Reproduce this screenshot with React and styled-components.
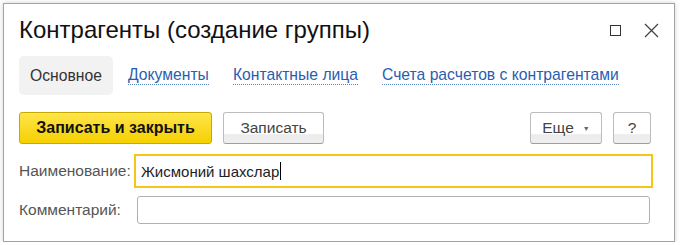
import React from "react";
import styled, { createGlobalStyle } from "styled-components";

const GlobalStyle = createGlobalStyle`
  html, body {
    margin: 0;
    background: #ffffff;
    font-family: "Liberation Sans", Arial, sans-serif;
  }
`;

const tabs = [
  { name: "Основное", active: true },
  { name: "Документы" },
  { name: "Контактные лица" },
  { name: "Счета расчетов с контрагентами" },
];

const App = () => {
  return (
    <>
      <GlobalStyle />
      <Window>
        <Header>
          <Title>Контрагенты (создание группы)</Title>
          <Controls>
            <IconButton aria-label="maximize">
              <svg width="13" height="13" viewBox="0 0 13 13">
                <rect x="1.5" y="1.5" width="10" height="10" fill="none" stroke="#333" strokeWidth="1" />
              </svg>
            </IconButton>
            <IconButton aria-label="close">
              <svg width="15" height="15" viewBox="0 0 15 15">
                <path d="M1 1 L14 14 M14 1 L1 14" stroke="#444" strokeWidth="1.3" />
              </svg>
            </IconButton>
          </Controls>
        </Header>

        <Tabs>
          {tabs.map((tab, index) =>
            tab.active ? (
              <ActiveTab key={index}>{tab.name}</ActiveTab>
            ) : (
              <LinkTab key={index}>{tab.name}</LinkTab>
            )
          )}
        </Tabs>

        <Toolbar>
          <Button $primary $width={193}>Записать и закрыть</Button>
          <Button $width={101}>Записать</Button>
          <Spacer />
          <Button $width={72}>
            Еще <Caret>▼</Caret>
          </Button>
          <Button $width={38}>?</Button>
        </Toolbar>

        <Form>
          <Label>Наименование:</Label>
          <Field $focused>
            Жисмоний шахслар<Cursor />
          </Field>
          <Label>Комментарий:</Label>
          <Field />
        </Form>
      </Window>
    </>
  );
};

const Window = styled.div`
  box-sizing: border-box;
  margin: 3px 0 0 3px;
  width: 672px;
  height: 239px;
  border: 1px solid #a3a3a3;
  background: #ffffff;
  box-shadow: 0 0 5px rgba(0, 0, 0, 0.18);
  padding: 0 23px 0 15px;
  display: flex;
  flex-direction: column;
`;

const Header = styled.div`
  display: flex;
  align-items: center;
  height: 52px;
`;

const Title = styled.h1`
  margin: 0;
  flex: 1;
  font-size: 24px;
  font-weight: normal;
  color: #111111;
  white-space: nowrap;
`;

const Controls = styled.div`
  display: flex;
  align-items: center;
  gap: 21px;
  margin-right: -8px;
`;

const IconButton = styled.div`
  display: flex;
  align-items: center;
  justify-content: center;
  width: 15px;
  height: 15px;
`;

const Tabs = styled.div`
  display: flex;
  align-items: center;
  gap: 24px;
  height: 39px;
`;

const ActiveTab = styled.div`
  box-sizing: border-box;
  display: flex;
  align-items: center;
  justify-content: center;
  width: 94px;
  height: 39px;
  margin-right: -9px;
  background: #f2f2f2;
  border-radius: 5px;
  font-size: 15.7px;
  color: #333333;
`;

const LinkTab = styled.span`
  font-size: 15.7px;
  color: #2a5db0;
  line-height: 18px;
  border-bottom: 1px dotted #5a86c8;
  cursor: pointer;
`;

const Toolbar = styled.div`
  display: flex;
  align-items: center;
  gap: 11px;
  margin-top: 17px;
  height: 32px;
`;

const Spacer = styled.div`
  flex: 1;
`;

const Button = styled.div`
  box-sizing: border-box;
  display: flex;
  align-items: center;
  justify-content: center;
  width: ${(p) => p.$width}px;
  height: 32px;
  border-radius: 3px;
  font-size: 15.5px;
  ${(p) =>
    p.$primary
      ? `
    background: linear-gradient(#ffe54a, #f5d000);
    border: 1px solid #c8a900;
    color: #111;
    font-weight: bold;
    font-size: 16px;
  `
      : `
    background: linear-gradient(#ffffff 0%, #ffffff 70%, #ececec 72%, #efefef 100%);
    border: 1px solid #bcbcbc;
    border-bottom-color: #9e9e9e;
    color: #444;
  `}
`;

const Caret = styled.span`
  font-size: 7px;
  color: #666;
  margin-left: 9px;
`;

const Form = styled.div`
  display: grid;
  grid-template-columns: 118px 1fr;
  align-items: center;
  row-gap: 11px;
  margin-top: 13px;
  padding-right: 1px;
`;

const Label = styled.div`
  font-size: 15.5px;
  color: #555555;
  white-space: nowrap;
`;

const Field = styled.div`
  box-sizing: border-box;
  display: flex;
  align-items: center;
  height: 28px;
  padding: 0 3px;
  border: 1px solid #b0b0b0;
  border-radius: 3px;
  font-size: 15px;
  color: #222;
  ${(p) =>
    p.$focused &&
    `
    border-color: transparent;
    border-radius: 0;
    outline: 2px solid #f5c518;
    outline-offset: 1px;
  `}
`;

const Cursor = styled.span`
  display: inline-block;
  width: 1px;
  height: 18px;
  background: #000;
  margin-left: 1px;
`;

export default App;
